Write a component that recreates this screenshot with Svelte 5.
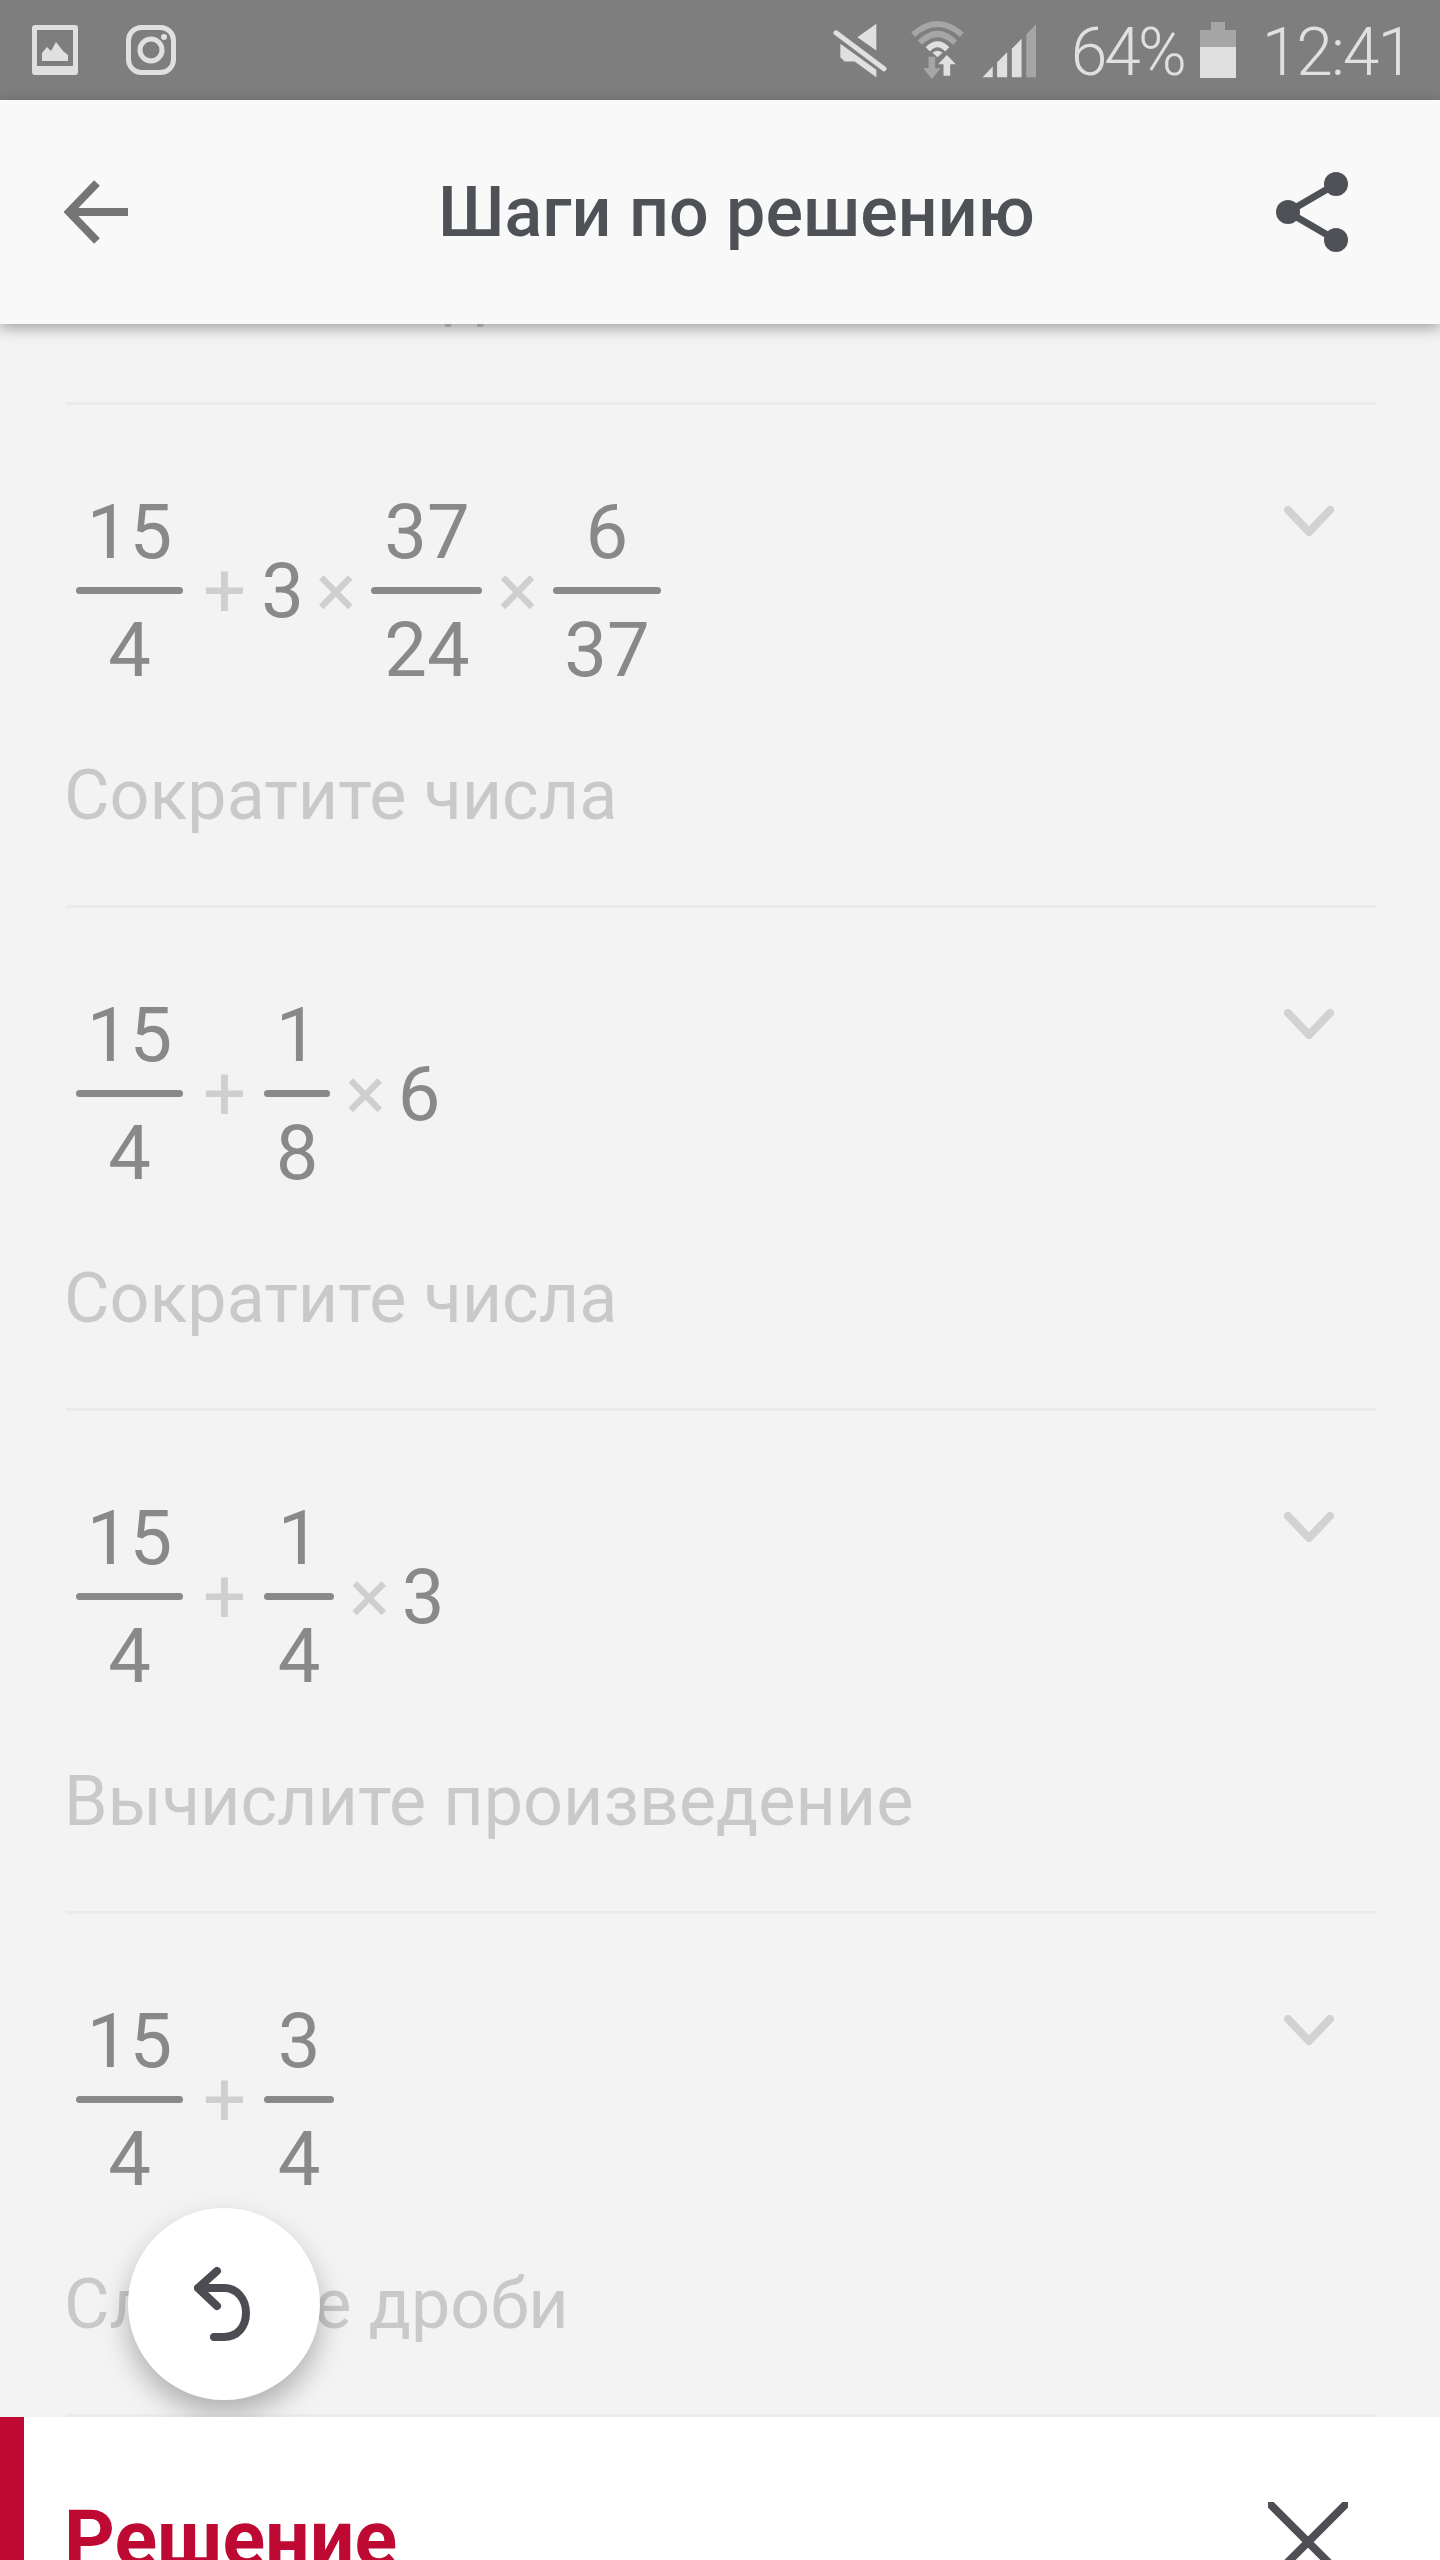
<script>
	// w is the fraction's width in px, as the bars differ a little per fraction
	const f = (n, d, w) => ({ n, d, w })

	const steps = [
		{ parts: [], label: 'Вычислите деление' },
		{ parts: [f(15, 4, 107), '+', 3, '×', f(37, 24, 111), '×', f(6, 37, 108)], label: 'Сократите числа' },
		{ parts: [f(15, 4, 107), '+', f(1, 8, 66), '×', 6], label: 'Сократите числа' },
		{ parts: [f(15, 4, 107), '+', f(1, 4, 70), '×', 3], label: 'Вычислите произведение' },
		{ parts: [f(15, 4, 107), '+', f(3, 4, 70)], label: 'Сложите дроби' }
	]
</script>

<div class="screen">
	<div class="status">
		<svg class="gallery" viewBox="0 0 46 50">
			<path
				fill-rule="evenodd"
				d="M3 0H43a3 3 0 0 1 3 3V47a3 3 0 0 1-3 3H3a3 3 0 0 1-3-3V3a3 3 0 0 1 3-3ZM5 5V41H41V5ZM10 36V28L15 22L19 26L24 17L31 26L36 30V36Z"
			/>
		</svg>
		<svg class="insta" viewBox="0 0 50 50">
			<rect x="2.5" y="2.5" width="45" height="45" rx="13" />
			<circle cx="25" cy="25" r="11" />
			<circle class="dot" cx="38" cy="12" r="3" />
		</svg>

		<svg class="mute" viewBox="95 65 165 170">
			<path d="M168 110L225 70V150ZM117 130L225 208V230L160 183H130L117 170Z" />
			<path class="slash" d="M104 97L248 205" />
		</svg>
		<svg class="wifi" viewBox="330 60 170 180">
			<path class="arc dim" d="M342 104Q415 40 488 104" />
			<path class="arc dim" d="M362 128Q415 76 468 128" />
			<path class="arc" d="M386 148Q415 118 444 148" />
			<path d="M400 158Q415 146 430 158L415 172Z" />
			<path class="dimfill" d="M388 170H408V205H425L398 237L372 205H388Z" />
			<path d="M443 165L470 193H453V227H433V193H417Z" />
		</svg>
		<svg class="signal" viewBox="540 65 170 170">
			<path d="M545 230L575 198V230ZM588 230V185L618 155V230ZM632 230V145L661 115V230Z" />
			<path class="dimfill" d="M675 230V102L704 72V230Z" />
		</svg>
		<span class="pct">64%</span>
		<svg class="battery" viewBox="0 0 36 56">
			<path class="dimfill" d="M11 0H25V8H36V25H0V8H11Z" />
			<rect y="25" width="36" height="31" />
		</svg>
		<span class="time">12:41</span>
	</div>

	<header class="appbar">
		<svg class="back" viewBox="0 0 64 64">
			<path d="M33 3L5 32L33 61M5 32H64" />
		</svg>
		<h1>Шаги по решению</h1>
		<svg class="share" viewBox="0 0 72 80">
			<path d="M60 12L12 40L60 68" />
			<circle cx="60" cy="12" r="12" />
			<circle cx="12" cy="40" r="12" />
			<circle cx="60" cy="68" r="12" />
		</svg>
	</header>

	<main class="scroll">
		<div class="list">
			{#each steps as step}
				<section class="step">
					<div class="head">
						<div class="math">
							{#each step.parts as part}
								{#if part.n}
									<span class="frac" style="width: {part.w}px">
										<span>{part.n}</span>
										<i></i>
										<span>{part.d}</span>
									</span>
								{:else if typeof part === 'string'}
									<span class="op" class:plus={part === '+'}>{part}</span>
								{:else}
									<span class="num">{part}</span>
								{/if}
							{/each}
						</div>
						<svg class="chevron" viewBox="0 0 50 30">
							<path d="M4 4L25 26L46 4" />
						</svg>
					</div>
					<p>{step.label}</p>
				</section>
			{/each}
		</div>

		<button class="fab" aria-label="Назад">
			<svg viewBox="3 0 60 76">
				<path d="M26 5L7 22L26 40M7 22H33C46 22 55 33 55 47C55 61 46 71 33 71H23" />
			</svg>
		</button>
	</main>

	<footer class="panel">
		<h2>Решение</h2>
		<svg class="close" viewBox="0 0 80 80">
			<path d="M3 3L77 77M77 3L3 77" />
		</svg>
	</footer>
</div>

<style>
	:global(body) {
		margin: 0;
	}
	.screen {
		display: flex;
		flex-direction: column;
		width: 1440px;
		height: 2560px;
		overflow: hidden;
		background: #f3f3f3;
		font-family: Roboto, 'Liberation Sans', sans-serif;
	}

	.status {
		display: flex;
		align-items: center;
		flex: none;
		height: 100px;
		padding: 0 28px 0 32px;
		box-sizing: border-box;
		background: #7e7e7e;
		color: #e0e0e0;
		font-weight: 300;
		font-size: 66px;
	}
	.status svg {
		flex: none;
		fill: #e0e0e0;
	}
	.gallery {
		width: 46px;
		height: 50px;
	}
	.insta {
		width: 50px;
		height: 50px;
		margin-left: 48px;
		fill: none !important;
		stroke: #e0e0e0;
		stroke-width: 5;
	}
	.insta .dot {
		fill: #e0e0e0;
		stroke: none;
	}
	.mute {
		width: 55px;
		height: 57px;
		margin-left: auto;
	}
	.slash {
		fill: none;
		stroke: #e0e0e0;
		stroke-width: 15;
		stroke-linecap: round;
	}
	.wifi {
		width: 57px;
		height: 60px;
		margin-left: 21px;
	}
	.arc {
		fill: none;
		stroke: #e0e0e0;
		stroke-width: 18;
	}
	.arc.dim {
		stroke: #a6a6a6;
	}
	.status .dimfill {
		fill: #a6a6a6;
	}
	.signal {
		width: 57px;
		height: 57px;
		margin-left: 15px;
	}
	.pct {
		margin: 6px 0 0 33px;
		letter-spacing: -3px;
		line-height: 94px;
	}
	.battery {
		width: 36px;
		height: 56px;
		margin-left: 16px;
	}
	.time {
		margin: 6px 0 0 26px;
		letter-spacing: -2px;
		line-height: 94px;
	}

	.appbar {
		position: relative;
		z-index: 2;
		display: flex;
		align-items: center;
		flex: none;
		height: 224px;
		padding: 0 92px 0 64px;
		box-sizing: border-box;
		background: #f9f9f9;
		box-shadow: 0 4px 14px rgba(0, 0, 0, 0.35);
	}
	.back {
		flex: none;
		width: 64px;
		height: 64px;
		fill: none;
		stroke: #757575;
		stroke-width: 8;
	}
	h1 {
		margin: 0 0 0 310px;
		color: #4e5156;
		font-size: 70px;
		font-weight: 500;
		line-height: 82px;
	}
	.share {
		flex: none;
		width: 72px;
		height: 80px;
		margin-left: auto;
		fill: #4e5156;
	}
	.share path {
		fill: none;
		stroke: #4e5156;
		stroke-width: 7;
	}

	.scroll {
		position: relative;
		flex: 1;
		min-height: 0;
		overflow: hidden;
	}
	.list {
		margin-top: -422px;
	}
	.step {
		height: 503px;
		margin: 0 64px 0 66px;
		box-sizing: border-box;
		border-bottom: 3px solid #ebebeb;
	}
	.head {
		display: flex;
		justify-content: space-between;
		height: 353px;
	}
	.math {
		display: flex;
		align-items: center;
		align-self: flex-start;
		gap: 15px;
		margin: 82px 0 0 10px;
		color: #898989;
		font-size: 76px;
		line-height: 90px;
	}
	.frac {
		display: flex;
		flex-direction: column;
		align-items: center;
	}
	.frac i {
		align-self: stretch;
		height: 7px;
		margin: 10px 0 11px;
		border-radius: 4px;
		background: #898989;
	}
	.op {
		color: #cfcfcf;
	}
	.op.plus {
		margin: 0 3px 0 5px;
	}
	.num {
		margin: 0 -3px;
	}
	.chevron {
		flex: none;
		width: 50px;
		height: 30px;
		margin: 101px 42px 0 0;
		fill: none;
		stroke: #d2d2d2;
		stroke-width: 8;
		stroke-linecap: round;
		stroke-linejoin: round;
	}
	p {
		margin: 0 0 0 -2px;
		color: #c9c9c9;
		font-size: 70px;
		line-height: 75px;
	}

	.fab {
		position: absolute;
		left: 128px;
		bottom: 17px;
		display: flex;
		align-items: center;
		justify-content: center;
		width: 192px;
		height: 192px;
		padding: 0;
		border: none;
		border-radius: 50%;
		background: #fff;
		box-shadow: 0 14px 28px rgba(0, 0, 0, 0.28);
	}
	.fab svg {
		width: 60px;
		height: 76px;
		fill: none;
		stroke: #4b4d52;
		stroke-width: 8;
		stroke-linecap: round;
		stroke-linejoin: round;
	}

	.panel {
		position: relative;
		z-index: 1;
		display: flex;
		justify-content: space-between;
		flex: none;
		height: 143px;
		padding: 0 92px 0 40px;
		border-left: 24px solid #be0a32;
		background: #fff;
	}
	h2 {
		margin: 80px 0 0;
		color: #be0a32;
		font-size: 79px;
		font-weight: 700;
		line-height: 84px;
	}
	.close {
		flex: none;
		width: 80px;
		height: 80px;
		margin-top: 85px;
		fill: none;
		stroke: #4d4f54;
		stroke-width: 8;
		stroke-linecap: round;
	}
</style>
